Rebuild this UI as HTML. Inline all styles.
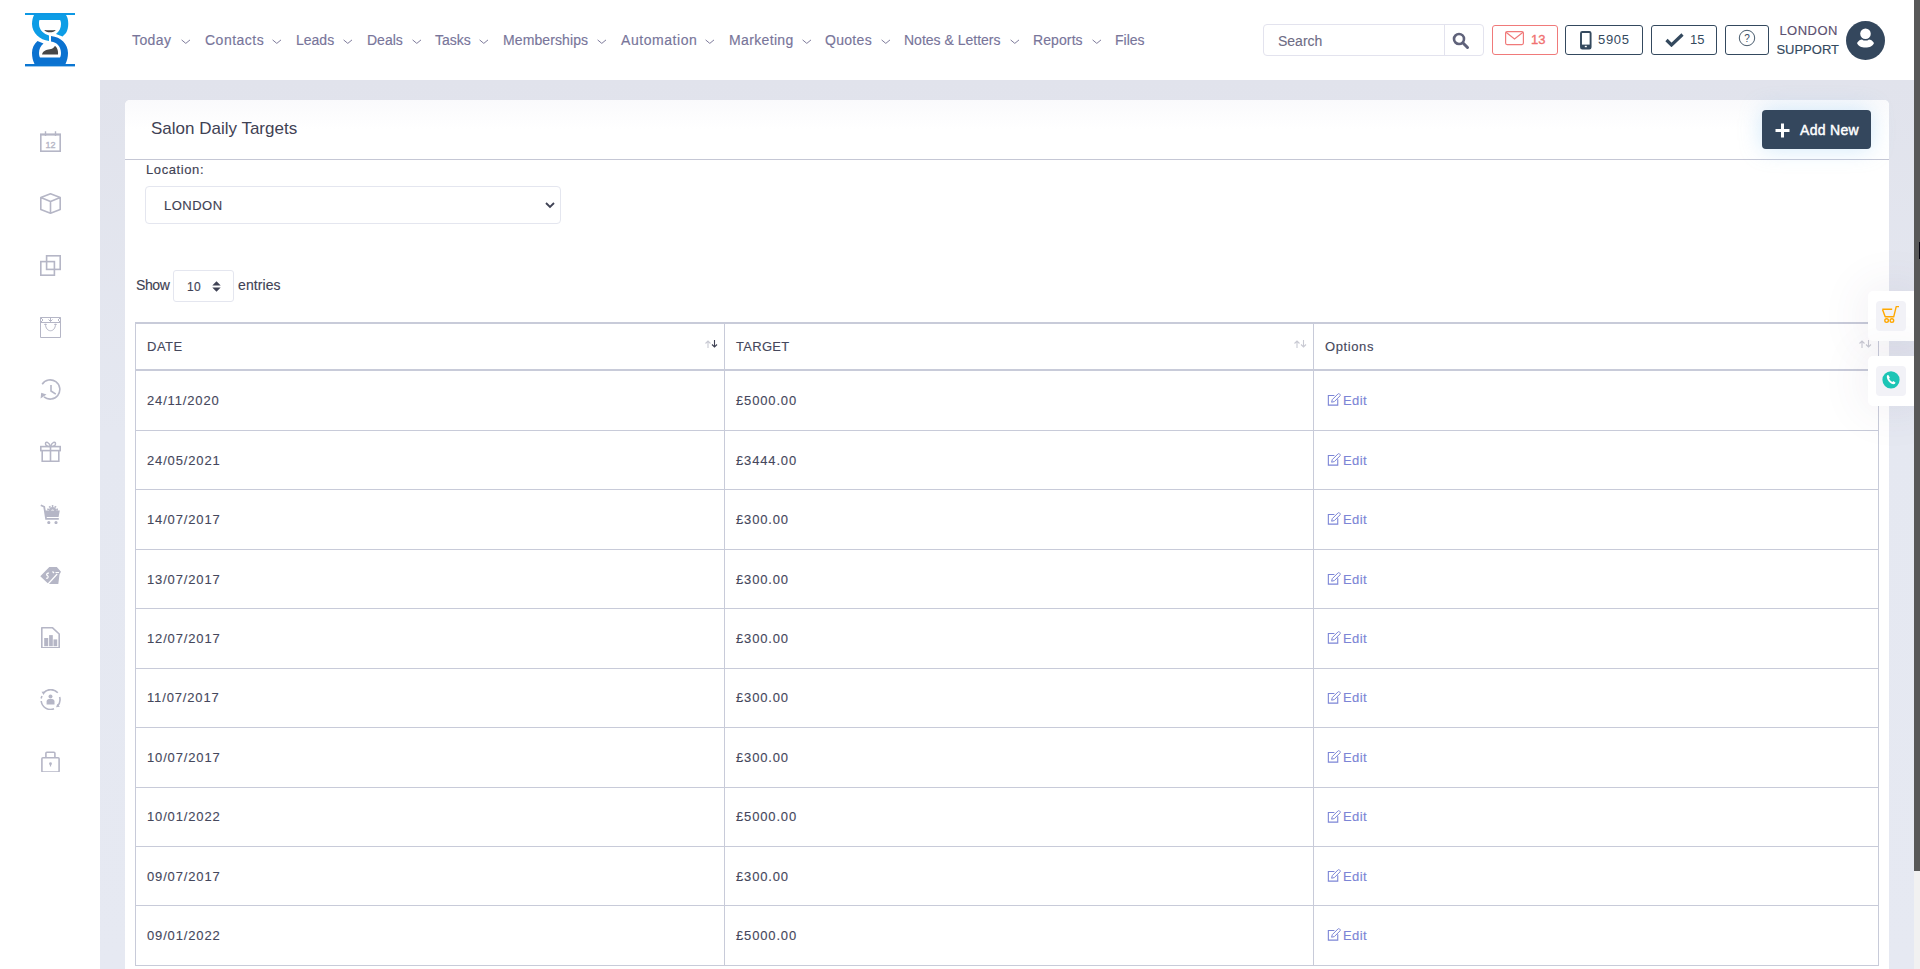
<!DOCTYPE html>
<html><head><meta charset="utf-8">
<style>
*{box-sizing:border-box;margin:0;padding:0}
html,body{width:1920px;height:969px;overflow:hidden;background:#fff;font-family:"Liberation Sans",sans-serif}
.abs{position:absolute}
#header{position:absolute;left:0;top:0;width:1914px;height:80px;background:#fff;z-index:3}
#side{position:absolute;left:0;top:80px;width:100px;height:889px;background:#fff}
#content{position:absolute;left:100px;top:80px;width:1814px;height:889px;background:linear-gradient(#e1e3ec,#e5e8f1 40%,#e6e9f2)}
#scroll{position:absolute;left:1914px;top:0;width:6px;height:969px;background:#f1f1f1;z-index:10}
#thumb{position:absolute;left:0;top:0;width:6px;height:871px;background:#585858}
.nav{position:absolute;top:32px;font-size:14px;color:#78759a;-webkit-text-stroke:0.15px #78759a;white-space:nowrap;line-height:16px}
.chev{position:absolute;top:38.5px;width:10px;height:5px}
.hbtn{position:absolute;top:25px;height:30px;border:1px solid #34495e;border-radius:3px;color:#34495e;font-size:13px}
#card{position:absolute;left:125px;top:100px;width:1764px;height:900px;background:#fff;border-radius:5px}
.sicon{position:absolute;left:39px;width:23px;height:23px}
table{position:absolute;left:135px;top:322px;border-collapse:collapse;width:1744px}
td,th{border:1px solid #c8cbd9;font-size:13px;color:#45475c;-webkit-text-stroke:0.12px #45475c;text-align:left;font-weight:normal;padding:0 0 0 11px;position:relative}
th{height:47px;border-top:2px solid #c8cbd9;border-bottom:2px solid #c8cbd9}
td{height:59.44px;letter-spacing:0.85px}
tr:nth-child(2) td{height:60.44px}
.sort{position:absolute;right:6px;top:15.7px}
.sort path{stroke-width:1.1}
.eico{position:absolute;left:13px;top:21px}
.edit{letter-spacing:0;-webkit-text-stroke:0.15px #7c85d6}
.edit{color:#7c85d6}
</style></head>
<body>
<div id="header">
  <!-- logo -->
  <svg class="abs" style="left:20px;top:8px" width="60" height="64" viewBox="0 0 60 64">
    <rect x="5" y="5" width="50" height="2" fill="#0d98e4"/>
    <rect x="5" y="56" width="50" height="2.4" fill="#0b76d2"/>
    <path d="M14 7 L46 7 C49 11 49 20 46 25 L42.5 28.5 L36 26 C39.5 23 41 20 41 16 C41 14 40.5 12.5 40 12 L19.5 12 C19 13 19 14 19 16 C19 22 24 26 29 27.5 L29 33 C20 32 12 25 12 16 C12 12 13 9 14 7 Z" fill="#0d9de6"/>
    <path d="M31 28 C41 29 48 36 48 45 C48 49 47 53 45.5 56 L14.5 56 C13 53 12 49 12 45 C12 40 14 36 17.5 33 L23.5 35.5 C20.5 38 19 41 19 45 C19 47 19.5 48.5 20 49.5 L40 49.5 C40.5 48.5 41 47 41 45 C41 39 37 34 31 33.5 Z" fill="#0b72d0"/>
    <path d="M24.2 21.9 C28 22.4 32 22.4 35.8 21.9 C34 25 26 25 24.2 21.9 Z" fill="#454545"/>
    <path d="M22 46.5 C23 42 28 41.5 31 41 C34 40.5 34.5 38 35 38 C37 39 38.5 43 38 46.5 Z" fill="#474747"/>
  </svg>
  <div class="nav" style="left:132px;letter-spacing:0.4px">Today</div>
  <svg class="chev" style="left:180.5px" viewBox="0 0 10 5"><path d="M0.6 0.9 L4.8 4.4 L9 0.9" fill="none" stroke="#7e7b9b" stroke-width="1"/></svg>
  <div class="nav" style="left:205px;letter-spacing:0.5px">Contacts</div>
  <svg class="chev" style="left:271.5px" viewBox="0 0 10 5"><path d="M0.6 0.9 L4.8 4.4 L9 0.9" fill="none" stroke="#7e7b9b" stroke-width="1"/></svg>
  <div class="nav" style="left:296px">Leads</div>
  <svg class="chev" style="left:342.5px" viewBox="0 0 10 5"><path d="M0.6 0.9 L4.8 4.4 L9 0.9" fill="none" stroke="#7e7b9b" stroke-width="1"/></svg>
  <div class="nav" style="left:367px">Deals</div>
  <svg class="chev" style="left:411.5px" viewBox="0 0 10 5"><path d="M0.6 0.9 L4.8 4.4 L9 0.9" fill="none" stroke="#7e7b9b" stroke-width="1"/></svg>
  <div class="nav" style="left:435px">Tasks</div>
  <svg class="chev" style="left:479px" viewBox="0 0 10 5"><path d="M0.6 0.9 L4.8 4.4 L9 0.9" fill="none" stroke="#7e7b9b" stroke-width="1"/></svg>
  <div class="nav" style="left:503px;letter-spacing:0.1px">Memberships</div>
  <svg class="chev" style="left:597px" viewBox="0 0 10 5"><path d="M0.6 0.9 L4.8 4.4 L9 0.9" fill="none" stroke="#7e7b9b" stroke-width="1"/></svg>
  <div class="nav" style="left:621px;letter-spacing:0.55px">Automation</div>
  <svg class="chev" style="left:704.5px" viewBox="0 0 10 5"><path d="M0.6 0.9 L4.8 4.4 L9 0.9" fill="none" stroke="#7e7b9b" stroke-width="1"/></svg>
  <div class="nav" style="left:729px;letter-spacing:0.35px">Marketing</div>
  <svg class="chev" style="left:801.5px" viewBox="0 0 10 5"><path d="M0.6 0.9 L4.8 4.4 L9 0.9" fill="none" stroke="#7e7b9b" stroke-width="1"/></svg>
  <div class="nav" style="left:825px;letter-spacing:0.3px">Quotes</div>
  <svg class="chev" style="left:880.5px" viewBox="0 0 10 5"><path d="M0.6 0.9 L4.8 4.4 L9 0.9" fill="none" stroke="#7e7b9b" stroke-width="1"/></svg>
  <div class="nav" style="left:904px">Notes &amp; Letters</div>
  <svg class="chev" style="left:1009.5px" viewBox="0 0 10 5"><path d="M0.6 0.9 L4.8 4.4 L9 0.9" fill="none" stroke="#7e7b9b" stroke-width="1"/></svg>
  <div class="nav" style="left:1033px;letter-spacing:0.1px">Reports</div>
  <svg class="chev" style="left:1091.5px" viewBox="0 0 10 5"><path d="M0.6 0.9 L4.8 4.4 L9 0.9" fill="none" stroke="#7e7b9b" stroke-width="1"/></svg>
  <div class="nav" style="left:1115px">Files</div>
  <!-- search -->
  <div class="abs" style="left:1263px;top:24px;width:221px;height:32px;border:1px solid #e3e3ee;border-radius:4px"></div>
  <div class="abs" style="left:1444px;top:25px;width:1px;height:30px;background:#e3e3ee"></div>
  <div class="abs" style="left:1278px;top:32.5px;font-size:14px;color:#6e6c85;line-height:16px;-webkit-text-stroke:0.1px #6e6c85">Search</div>
  <svg class="abs" style="left:1452px;top:32px" width="18" height="18" viewBox="0 0 18 18"><circle cx="7" cy="7" r="5" fill="none" stroke="#5f627a" stroke-width="2.6"/><path d="M10.8 10.8 L15.5 15.5" stroke="#5f627a" stroke-width="3" stroke-linecap="round"/></svg>
  <!-- mail -->
  <div class="abs" style="left:1492px;top:25px;width:66px;height:30px;border:1px solid #f07a7a;border-radius:3px"></div>
  <svg class="abs" style="left:1505px;top:31px" width="19" height="15" viewBox="0 0 19 15"><rect x="0.6" y="0.6" width="17.8" height="13" rx="1.5" fill="none" stroke="#f07a7a" stroke-width="1.2"/><path d="M1 1.2 L9.5 8 L18 1.2" fill="none" stroke="#f07a7a" stroke-width="1.2"/></svg>
  <div class="abs" style="left:1531px;top:32px;font-size:13px;color:#f07070;line-height:16px;-webkit-text-stroke:0.35px #f07070">13</div>
  <!-- phone -->
  <div class="hbtn" style="left:1565px;width:78px"></div>
  <svg class="abs" style="left:1579.5px;top:31px" width="12" height="19" viewBox="0 0 12 19"><rect x="1" y="1" width="9.6" height="16.5" rx="1.3" fill="none" stroke="#34495e" stroke-width="1.9"/><rect x="1" y="13.6" width="9.6" height="3.9" fill="#34495e"/><rect x="4.8" y="14.8" width="2" height="1.4" fill="#fff"/></svg>
  <div class="abs" style="left:1598px;top:32px;font-size:13px;color:#34495e;line-height:16px;letter-spacing:0.7px">5905</div>
  <!-- check -->
  <div class="hbtn" style="left:1651px;width:66px"></div>
  <svg class="abs" style="left:1665px;top:33px" width="19" height="14" viewBox="0 0 19 14"><path d="M1.5 7 L6.5 12 L17.5 1.5" fill="none" stroke="#34495e" stroke-width="3.2"/></svg>
  <div class="abs" style="left:1690px;top:32px;font-size:13px;color:#34495e;line-height:16px">15</div>
  <!-- help -->
  <div class="hbtn" style="left:1725px;width:44px"></div>
  <svg class="abs" style="left:1738px;top:29px" width="18" height="18" viewBox="0 0 18 18"><circle cx="9" cy="9" r="7.7" fill="none" stroke="#34495e" stroke-width="0.9"/><text x="9" y="12.6" text-anchor="middle" font-size="10" fill="#34495e" font-family="Liberation Sans">?</text></svg>
  <div class="abs" style="left:1775px;top:20.5px;width:64px;text-align:right;font-size:13px;line-height:19px;color:#5b5070;-webkit-text-stroke:0.15px currentColor"><span style="letter-spacing:0.5px;margin-right:1px">LONDON</span><br><span style="color:#34495e">SUPPORT</span></div>
  <svg class="abs" style="left:1846px;top:21px" width="39" height="39" viewBox="0 0 39 39"><circle cx="19.5" cy="19.5" r="19.5" fill="#34475d"/><circle cx="19.5" cy="12.8" r="5.3" fill="#fff"/><path d="M11 22 C12.5 19.2 14.5 18.6 16 18.4 C17 19.3 18.2 19.6 19.5 19.6 C20.8 19.6 22 19.3 23 18.4 C24.5 18.6 26.5 19.2 28 22 C27 25 23.5 26.6 19.5 26.6 C15.5 26.6 12 25 11 22 Z" fill="#fff"/></svg>
</div>

<div id="side"></div>
<div id="sideicons">
  <svg class="abs" style="left:40px;top:130.5px" width="21" height="21" viewBox="0 0 21 21"><rect x="0.8" y="3.2" width="19.4" height="17" fill="none" stroke="#b5b6c6" stroke-width="1.6"/><rect x="0.8" y="3.2" width="19.4" height="1.4" fill="#b5b6c6"/><path d="M5.5 0.3 V5 M15.5 0.3 V5" stroke="#b5b6c6" stroke-width="1.4"/><text x="10.5" y="16.6" text-anchor="middle" font-size="9" fill="#b5b6c6" stroke="#b5b6c6" stroke-width="0.35" font-family="Liberation Sans">12</text></svg>
  <svg class="abs" style="left:40px;top:192.5px" width="21" height="21" viewBox="0 0 21 21"><path d="M10.5 0.8 L20.2 4.6 V16.4 L10.5 20.2 L0.8 16.4 V4.6 Z M0.8 4.6 L10.5 8.6 L20.2 4.6 M10.5 8.6 V20.2" fill="none" stroke="#b5b6c6" stroke-width="1.6" stroke-linejoin="round"/></svg>
  <svg class="abs" style="left:40px;top:254.5px" width="21" height="21" viewBox="0 0 21 21"><rect x="6.6" y="0.8" width="13.6" height="13.6" fill="none" stroke="#b5b6c6" stroke-width="1.6"/><rect x="0.8" y="6.6" width="13.6" height="13.6" fill="none" stroke="#b5b6c6" stroke-width="1.6"/></svg>
  <svg class="abs" style="left:40px;top:316.5px" width="21" height="21" viewBox="0 0 21 21"><path d="M0.5 0.5 H20.5 V20.5 H0.5 Z M0.5 5.5 H20.5 M10.5 0 V4.5 M8.5 2.5 L10.5 4.5 L12.5 2.5 M5.5 7 C5.5 16 15.5 16 15.5 7 M4.3 8 L5.5 6.8 L6.7 8 M14.3 8 L15.5 6.8 L16.7 8 M0.5 0.5 L3 3 L0.5 5.5 M20.5 0.5 L18 3 L20.5 5.5" fill="none" stroke="#b5b6c6" stroke-width="1"/></svg>
  <svg class="abs" style="left:40px;top:378.5px" width="21" height="21" viewBox="0 0 21 21"><path d="M2.2 5.2 A9.6 9.6 0 1 1 4 17.8" fill="none" stroke="#b5b6c6" stroke-width="1.6"/><path d="M0.6 19.5 L1.2 13.8 L6.5 15.5 Z" fill="#b5b6c6"/><path d="M11 6 V12 L15.8 15.2" fill="none" stroke="#b5b6c6" stroke-width="1.6"/></svg>
  <svg class="abs" style="left:40px;top:440.5px" width="21" height="21" viewBox="0 0 21 21"><rect x="0.8" y="5.6" width="19.4" height="4" fill="none" stroke="#b5b6c6" stroke-width="1.6"/><path d="M2.2 9.6 V20.2 H18.8 V9.6 M10.5 5.6 V20.2" fill="none" stroke="#b5b6c6" stroke-width="1.6"/><path d="M10.5 5.6 C8 5.6 5.5 5 5.5 2.8 C5.5 0 9 0.8 10.5 5.6 C12 0.8 15.5 0 15.5 2.8 C15.5 5 13 5.6 10.5 5.6" fill="none" stroke="#b5b6c6" stroke-width="1.5"/></svg>
  <svg class="abs" style="left:40px;top:502.5px" width="21" height="21" viewBox="0 0 21 21"><path d="M0.8 2.3 L4.2 3.8 L6.1 15.9 H18.8" fill="none" stroke="#b5b6c6" stroke-width="1.8"/><circle cx="12.6" cy="7.6" r="3.6" fill="#b5b6c6"/><circle cx="12.6" cy="7.6" r="4.6" fill="none" stroke="#b5b6c6" stroke-width="1.8" stroke-dasharray="1.6 1.3"/><circle cx="12.6" cy="8" r="1.6" fill="#fff"/><path d="M4.8 7.6 H19.8 L18.6 14.1 H6 Z" fill="#b5b6c6"/><circle cx="8.8" cy="19.6" r="1.6" fill="#b5b6c6"/><circle cx="16" cy="19.6" r="1.6" fill="#b5b6c6"/></svg>
  <svg class="abs" style="left:40px;top:564.5px" width="21" height="21" viewBox="0 0 21 21"><path d="M0.3 11.2 L9.3 2 H16.8 L21 6.8 L19.5 9.5 L18.3 19 H8.5 Z" fill="#b5b6c6"/><path d="M7.6 19.5 L17.2 9" stroke="#fff" stroke-width="1.2"/><path d="M9 8.2 C7 7.8 5.8 9.6 7.4 10.6 C8.9 11.6 8 13.6 6 13.2" fill="none" stroke="#fff" stroke-width="1.2"/><path d="M12.5 6.5 L14 8 M15.5 7.5 L19 7.5" stroke="#fff" stroke-width="1.2"/></svg>
  <svg class="abs" style="left:40px;top:626.5px" width="21" height="21" viewBox="0 0 21 21"><path d="M1.8 0.8 H12.6 L19.2 7 V20.8 H1.8 Z" fill="none" stroke="#b5b6c6" stroke-width="1.6" stroke-linejoin="round"/><rect x="4.2" y="11" width="4" height="8.2" fill="#b5b6c6"/><rect x="9.1" y="8.1" width="3.7" height="11.1" fill="#b5b6c6"/><rect x="13.5" y="12.4" width="3.7" height="6.8" fill="#b5b6c6"/></svg>
  <svg class="abs" style="left:40px;top:688.5px" width="21" height="21" viewBox="0 0 21 21"><path d="M3.5 4 A9.4 9.4 0 0 1 17.8 3.8 M19.6 8 A9.4 9.4 0 0 1 17.2 17.3 M14 19.8 A9.4 9.4 0 0 1 1.2 12 M1.2 9.5 A9.4 9.4 0 0 1 2 7" fill="none" stroke="#b5b6c6" stroke-width="1.6"/><path d="M1.5 2.8 L5.3 2.5 L3.6 6 Z M19.8 17.8 L16 18.3 L17.6 14.8 Z" fill="#b5b6c6"/><circle cx="10.5" cy="7.5" r="2" fill="#b5b6c6"/><path d="M6.6 15.5 V12.5 C6.6 10.5 8 10 10.5 10 C13 10 14.5 10.5 14.5 12.5 V15.5 Z" fill="#b5b6c6"/></svg>
  <svg class="abs" style="left:40px;top:750.5px" width="21" height="21" viewBox="0 0 21 21"><rect x="5.9" y="1.2" width="9" height="6" rx="1" fill="none" stroke="#b5b6c6" stroke-width="1.6"/><rect x="1.9" y="6.8" width="17.2" height="14.2" rx="1" fill="#fff" stroke="#b5b6c6" stroke-width="1.6"/><circle cx="10.5" cy="12.7" r="1.4" fill="#b5b6c6"/><path d="M10.5 13 V15.5" stroke="#b5b6c6" stroke-width="1.2"/></svg>
</div>
<div id="content">
</div>
<div id="card">
  <div class="abs" style="left:0;top:0;width:1764px;height:60px;border-bottom:1px solid #c5c7d5;border-radius:5px 5px 0 0;background:linear-gradient(#fafafc,#fff 50%)"></div>
  <div class="abs" style="left:26px;top:19px;font-size:17px;color:#3f4254;line-height:20px">Salon Daily Targets</div>
  <div class="abs" style="left:1637px;top:10px;width:109px;height:39px;background:#34475d;border-radius:4px;box-shadow:0 0 22px rgba(120,190,240,0.35)"></div>
  <svg class="abs" style="left:1650px;top:23px" width="15" height="15" viewBox="0 0 15 15"><path d="M7.5 0.5 V14.5 M0.5 7.5 H14.5" stroke="#fff" stroke-width="3"/></svg>
  <div class="abs" style="left:1675px;top:22px;font-size:14px;color:#fff;line-height:16px;letter-spacing:0.3px;-webkit-text-stroke:0.45px #fff">Add New</div>
  <div class="abs" style="left:21px;top:62px;font-size:13px;color:#3f4254;line-height:16px;letter-spacing:0.6px;-webkit-text-stroke:0.15px #3f4254">Location:</div>
  <div class="abs" style="left:20px;top:86px;width:416px;height:38px;border:1px solid #e4e6ef;border-radius:4px"></div>
  <div class="abs" style="left:39px;top:98px;font-size:13px;color:#3f4254;line-height:16px;letter-spacing:0.5px;-webkit-text-stroke:0.15px #3f4254">LONDON</div>
  <svg class="abs" style="left:420px;top:101px" width="10" height="8" viewBox="0 0 10 8"><path d="M1 2 L5 6 L9 2" fill="none" stroke="#3f4254" stroke-width="1.8"/></svg>
  <div class="abs" style="left:11px;top:176.5px;font-size:14px;color:#3f4254;line-height:16px;letter-spacing:-0.4px;-webkit-text-stroke:0.15px #3f4254">Show</div>
  <div class="abs" style="left:48px;top:170px;width:61px;height:32px;border:1px solid #e4e6ef;border-radius:3px"></div>
  <div class="abs" style="left:62px;top:180px;font-size:12px;color:#3f4254;line-height:14px;letter-spacing:0.3px;-webkit-text-stroke:0.15px #3f4254">10</div>
  <svg class="abs" style="left:87px;top:181px" width="9" height="11" viewBox="0 0 9 11"><path d="M0.3 4.6 L4.5 0.3 L8.7 4.6 Z M0.3 6.4 L4.5 10.7 L8.7 6.4 Z" fill="#3f4254"/></svg>
  <div class="abs" style="left:113px;top:176.5px;font-size:14px;color:#3f4254;line-height:16px;letter-spacing:0.1px;-webkit-text-stroke:0.15px #3f4254">entries</div>
</div>

<table>
<tr><th style="width:589px"><span class="hd" style="letter-spacing:0.5px">DATE</span><svg class="sort" viewBox="0 0 13 8" width="13" height="8"><path d="M3 8 V1 M0.5 3.5 L3 1 L5.5 3.5" fill="none" stroke="#c9cad3" stroke-width="1.3"/><path d="M9.5 0 V7 M7 4.5 L9.5 7 L12 4.5" fill="none" stroke="#3f4254" stroke-width="1.3"/></svg></th><th style="width:589px"><span class="hd" style="letter-spacing:0.3px">TARGET</span><svg class="sort" viewBox="0 0 13 8" width="13" height="8"><path d="M3 8 V1 M0.5 3.5 L3 1 L5.5 3.5" fill="none" stroke="#c9cad3" stroke-width="1.3"/><path d="M9.5 0 V7 M7 4.5 L9.5 7 L12 4.5" fill="none" stroke="#c9cad3" stroke-width="1.3"/></svg></th><th><span class="hd" style="letter-spacing:0.6px">Options</span><svg class="sort" viewBox="0 0 13 8" width="13" height="8"><path d="M3 8 V1 M0.5 3.5 L3 1 L5.5 3.5" fill="none" stroke="#c9cad3" stroke-width="1.3"/><path d="M9.5 0 V7 M7 4.5 L9.5 7 L12 4.5" fill="none" stroke="#c9cad3" stroke-width="1.3"/></svg></th></tr>
<tr><td>24/11/2020</td><td>£5000.00</td><td class="edit"><svg class="eico" viewBox="0 0 15 14" width="15" height="14"><path d="M7.4 3.55 H1.35 V13.15 H10.75 V7.2" fill="none" stroke="#7c85d6" stroke-width="1.1"/><path d="M4.6 10.2 L5.3 7.6 L10.9 2 C11.4 1.5 12.1 1.5 12.6 2 L12.9 2.3 C13.4 2.8 13.4 3.5 12.9 4 L7.3 9.6 Z" fill="none" stroke="#7c85d6" stroke-width="1"/></svg><span style="margin-left:18px;letter-spacing:0.4px">Edit</span></td></tr>
<tr><td>24/05/2021</td><td>£3444.00</td><td class="edit"><svg class="eico" viewBox="0 0 15 14" width="15" height="14"><path d="M7.4 3.55 H1.35 V13.15 H10.75 V7.2" fill="none" stroke="#7c85d6" stroke-width="1.1"/><path d="M4.6 10.2 L5.3 7.6 L10.9 2 C11.4 1.5 12.1 1.5 12.6 2 L12.9 2.3 C13.4 2.8 13.4 3.5 12.9 4 L7.3 9.6 Z" fill="none" stroke="#7c85d6" stroke-width="1"/></svg><span style="margin-left:18px;letter-spacing:0.4px">Edit</span></td></tr>
<tr><td>14/07/2017</td><td>£300.00</td><td class="edit"><svg class="eico" viewBox="0 0 15 14" width="15" height="14"><path d="M7.4 3.55 H1.35 V13.15 H10.75 V7.2" fill="none" stroke="#7c85d6" stroke-width="1.1"/><path d="M4.6 10.2 L5.3 7.6 L10.9 2 C11.4 1.5 12.1 1.5 12.6 2 L12.9 2.3 C13.4 2.8 13.4 3.5 12.9 4 L7.3 9.6 Z" fill="none" stroke="#7c85d6" stroke-width="1"/></svg><span style="margin-left:18px;letter-spacing:0.4px">Edit</span></td></tr>
<tr><td>13/07/2017</td><td>£300.00</td><td class="edit"><svg class="eico" viewBox="0 0 15 14" width="15" height="14"><path d="M7.4 3.55 H1.35 V13.15 H10.75 V7.2" fill="none" stroke="#7c85d6" stroke-width="1.1"/><path d="M4.6 10.2 L5.3 7.6 L10.9 2 C11.4 1.5 12.1 1.5 12.6 2 L12.9 2.3 C13.4 2.8 13.4 3.5 12.9 4 L7.3 9.6 Z" fill="none" stroke="#7c85d6" stroke-width="1"/></svg><span style="margin-left:18px;letter-spacing:0.4px">Edit</span></td></tr>
<tr><td>12/07/2017</td><td>£300.00</td><td class="edit"><svg class="eico" viewBox="0 0 15 14" width="15" height="14"><path d="M7.4 3.55 H1.35 V13.15 H10.75 V7.2" fill="none" stroke="#7c85d6" stroke-width="1.1"/><path d="M4.6 10.2 L5.3 7.6 L10.9 2 C11.4 1.5 12.1 1.5 12.6 2 L12.9 2.3 C13.4 2.8 13.4 3.5 12.9 4 L7.3 9.6 Z" fill="none" stroke="#7c85d6" stroke-width="1"/></svg><span style="margin-left:18px;letter-spacing:0.4px">Edit</span></td></tr>
<tr><td>11/07/2017</td><td>£300.00</td><td class="edit"><svg class="eico" viewBox="0 0 15 14" width="15" height="14"><path d="M7.4 3.55 H1.35 V13.15 H10.75 V7.2" fill="none" stroke="#7c85d6" stroke-width="1.1"/><path d="M4.6 10.2 L5.3 7.6 L10.9 2 C11.4 1.5 12.1 1.5 12.6 2 L12.9 2.3 C13.4 2.8 13.4 3.5 12.9 4 L7.3 9.6 Z" fill="none" stroke="#7c85d6" stroke-width="1"/></svg><span style="margin-left:18px;letter-spacing:0.4px">Edit</span></td></tr>
<tr><td>10/07/2017</td><td>£300.00</td><td class="edit"><svg class="eico" viewBox="0 0 15 14" width="15" height="14"><path d="M7.4 3.55 H1.35 V13.15 H10.75 V7.2" fill="none" stroke="#7c85d6" stroke-width="1.1"/><path d="M4.6 10.2 L5.3 7.6 L10.9 2 C11.4 1.5 12.1 1.5 12.6 2 L12.9 2.3 C13.4 2.8 13.4 3.5 12.9 4 L7.3 9.6 Z" fill="none" stroke="#7c85d6" stroke-width="1"/></svg><span style="margin-left:18px;letter-spacing:0.4px">Edit</span></td></tr>
<tr><td>10/01/2022</td><td>£5000.00</td><td class="edit"><svg class="eico" viewBox="0 0 15 14" width="15" height="14"><path d="M7.4 3.55 H1.35 V13.15 H10.75 V7.2" fill="none" stroke="#7c85d6" stroke-width="1.1"/><path d="M4.6 10.2 L5.3 7.6 L10.9 2 C11.4 1.5 12.1 1.5 12.6 2 L12.9 2.3 C13.4 2.8 13.4 3.5 12.9 4 L7.3 9.6 Z" fill="none" stroke="#7c85d6" stroke-width="1"/></svg><span style="margin-left:18px;letter-spacing:0.4px">Edit</span></td></tr>
<tr><td>09/07/2017</td><td>£300.00</td><td class="edit"><svg class="eico" viewBox="0 0 15 14" width="15" height="14"><path d="M7.4 3.55 H1.35 V13.15 H10.75 V7.2" fill="none" stroke="#7c85d6" stroke-width="1.1"/><path d="M4.6 10.2 L5.3 7.6 L10.9 2 C11.4 1.5 12.1 1.5 12.6 2 L12.9 2.3 C13.4 2.8 13.4 3.5 12.9 4 L7.3 9.6 Z" fill="none" stroke="#7c85d6" stroke-width="1"/></svg><span style="margin-left:18px;letter-spacing:0.4px">Edit</span></td></tr>
<tr><td>09/01/2022</td><td>£5000.00</td><td class="edit"><svg class="eico" viewBox="0 0 15 14" width="15" height="14"><path d="M7.4 3.55 H1.35 V13.15 H10.75 V7.2" fill="none" stroke="#7c85d6" stroke-width="1.1"/><path d="M4.6 10.2 L5.3 7.6 L10.9 2 C11.4 1.5 12.1 1.5 12.6 2 L12.9 2.3 C13.4 2.8 13.4 3.5 12.9 4 L7.3 9.6 Z" fill="none" stroke="#7c85d6" stroke-width="1"/></svg><span style="margin-left:18px;letter-spacing:0.4px">Edit</span></td></tr>
</table>


<div class="abs" style="left:1868px;top:291px;width:52px;height:50px;background:#fff;border-radius:5px 0 0 5px;box-shadow:0 0 50px rgba(82,63,105,0.11);z-index:5"></div>
<div class="abs" style="left:1876px;top:301px;width:30px;height:30px;background:#f2f2f7;border-radius:4px;z-index:6"></div>
<svg class="abs" style="left:1876px;top:301px;z-index:7" width="30" height="30" viewBox="0 0 30 30"><path d="M6.3 8.2 H16.2 M6.5 8.4 L9.2 15.8 H17.7 L20.2 5.6 H23" fill="none" stroke="#ffa800" stroke-width="1.4" stroke-linejoin="round"/><circle cx="10.6" cy="19.6" r="1.8" fill="none" stroke="#ffa800" stroke-width="1.4"/><circle cx="15.9" cy="19.6" r="1.8" fill="none" stroke="#ffa800" stroke-width="1.4"/></svg>
<div class="abs" style="left:1868px;top:356px;width:52px;height:50px;background:#fff;border-radius:5px 0 0 5px;box-shadow:0 0 50px rgba(82,63,105,0.11);z-index:5"></div>
<div class="abs" style="left:1876px;top:366px;width:30px;height:30px;background:#f2f2f7;border-radius:4px;z-index:6"></div>
<svg class="abs" style="left:1876px;top:366px;z-index:7" width="30" height="30" viewBox="0 0 30 30"><circle cx="15" cy="13.8" r="8.6" fill="#1cc5b5"/><path d="M11.2 9.3 C10.4 10.5 10.8 13 12.6 15.2 C14.4 17.4 17 18.6 18.6 18 L19.6 16.8 L17.4 15 L16.2 15.9 C15 15.4 13.6 13.9 13.1 12.6 L13.9 11.5 L12.3 9 Z" fill="#fff"/></svg>
<div id="scroll"><div id="thumb"></div><div style="position:absolute;left:5px;top:242px;width:1px;height:17px;background:#05050f"></div></div>
</body></html>
